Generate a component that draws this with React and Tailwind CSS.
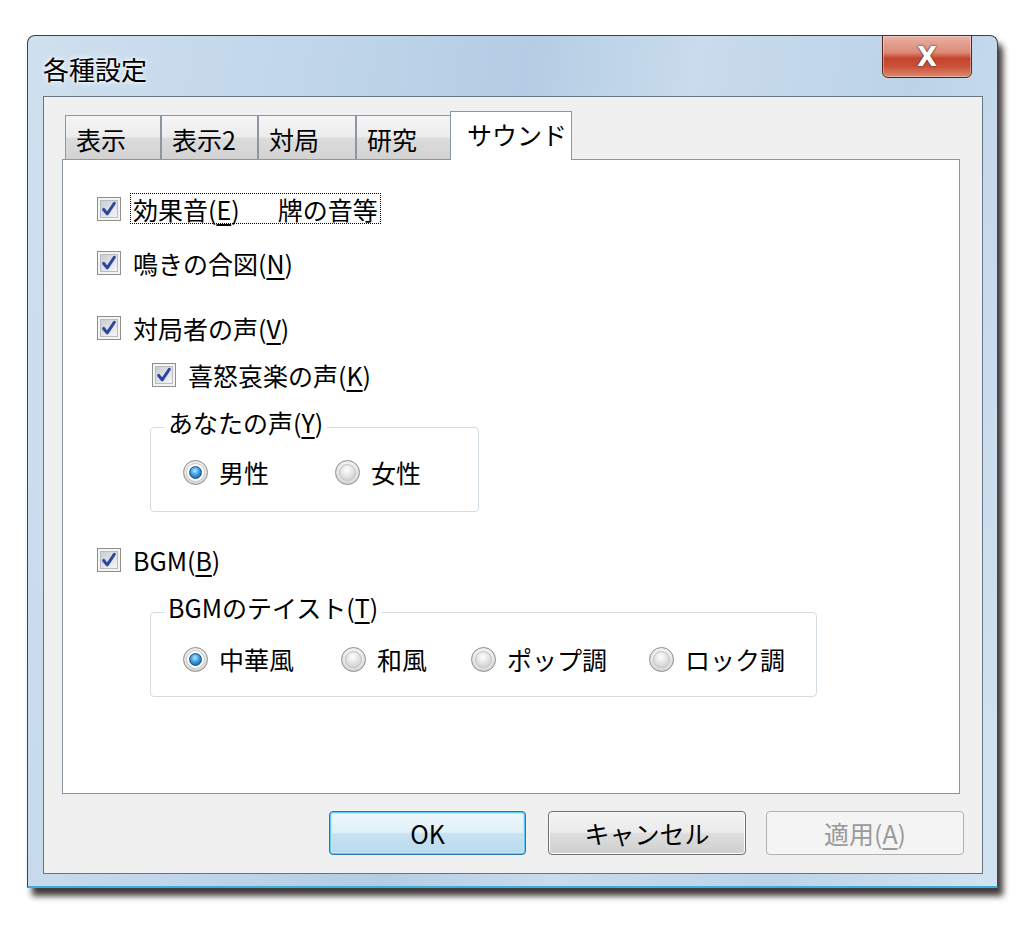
import React from "react";

function Check() {
  return (
    <div className="w-[24px] h-[24px] shrink-0 border border-[#8e8f8f] bg-[#f4f4f4] p-[2px]">
      <div className="w-full h-full border border-[#b9bcc0] bg-[linear-gradient(135deg,#c9ccd1,#f6f6f6)] flex items-center justify-center">
        <svg width="18" height="18" viewBox="0 0 18 18">
          <path d="M3 9.5 L7 14.5 L15 2.5" fill="none" stroke="#2b47a0" strokeWidth="3.4" strokeLinecap="round" strokeLinejoin="round" />
        </svg>
      </div>
    </div>
  );
}

function Radio({ on }) {
  return (
    <div className="w-[25px] h-[25px] shrink-0 rounded-full border border-[#8d8d8d] bg-[radial-gradient(circle_at_50%_35%,#ffffff,#e6e6e6_55%,#c4c4c4)] flex items-center justify-center">
      {on ? (
        <div className="w-[19px] h-[19px] rounded-full bg-white flex items-center justify-center border border-[#c9c9c9]">
          <div className="w-[13px] h-[13px] rounded-full border border-[#1c4f7e] bg-[radial-gradient(circle_at_45%_35%,#b5ecff,#3a9be0_45%,#104f8f)]" />
        </div>
      ) : (
        <div className="w-[17px] h-[17px] rounded-full bg-[radial-gradient(circle_at_45%_35%,#ffffff,#dcdcdc_60%,#c8c8c8)] border border-[#c2c2c2]" />
      )}
    </div>
  );
}

function U({ children }) {
  return <span className="underline underline-offset-[4px] decoration-[2px]">{children}</span>;
}

function CheckRow({ children, className = "" }) {
  return (
    <div className={"h-[30px] flex items-center " + className}>
      <Check />
      <span className="ml-[12px] whitespace-nowrap">{children}</span>
    </div>
  );
}

function RadioItem({ on, w, children }) {
  return (
    <div className={"h-[30px] flex items-center " + w}>
      <Radio on={on} />
      <span className="ml-[11px] whitespace-nowrap">{children}</span>
    </div>
  );
}

export default function App() {
  const tabBase =
    "h-[44px] border border-b-0 border-[#8c97a3] bg-[linear-gradient(#f6f6f6,#ececec_48%,#dcdcdc_52%,#d2d2d2)] flex items-center pl-[10px] pt-[2px] shrink-0";
  return (
    <div className="w-[1024px] min-h-[926px] bg-white pt-[35px] pl-[27px] text-black text-[25px] leading-[30px] font-['Noto_Sans_CJK_JP','Noto_Sans',sans-serif]">
      <div className="relative w-[971px] h-[853px] rounded-t-[8px] border border-[#3b4550] border-b-2 border-b-[#39aee0] bg-[linear-gradient(100deg,#cfe0ef_0%,#c1d6ea_25%,#b4cde4_45%,#c9dbec_60%,#bcd3e8_80%,#d3e3f1_100%)] shadow-[5px_8px_6px_rgba(20,10,10,0.8)] flex flex-col">
        {/* title bar */}
        <div className="h-[60px] shrink-0 flex items-start">
          <span className="ml-[15px] mt-[18px] text-[26px] [text-shadow:0_0_6px_#ffffff,0_0_3px_#ffffff]">各種設定</span>
        </div>
        <div className="absolute right-[25px] -top-px w-[90px] h-[43px] rounded-b-[6px] border border-[#5e2419] bg-[linear-gradient(#e9b1a5,#dc8a78_40%,#c4432b_55%,#c9533a_75%,#dd8a70)] shadow-[inset_0_0_0_1px_rgba(255,255,255,0.35)] flex items-center justify-center">
          <span className="text-white font-['DejaVu_Sans',sans-serif] font-bold text-[26px] leading-none [text-shadow:0_0_2px_#3b2a2a,0_0_1px_#3b2a2a]">X</span>
        </div>

        {/* client */}
        <div className="ml-[15px] mr-[14px] h-[778px] shrink-0 border border-[#687480] bg-[#f0f0f0] flex flex-col">
          {/* tabs */}
          <div className="ml-[21px] mt-[14px] flex items-end h-[48px] relative z-10">
            <div className={tabBase + " w-[96px]"}>表示</div>
            <div className={tabBase + " w-[97px]"}>表示2</div>
            <div className={tabBase + " w-[98px]"}>対局</div>
            <div className={tabBase + " w-[96px]"}>研究</div>
            <div className="-ml-[2px] h-[49px] -mb-px w-[122px] border border-b-0 border-[#8c97a3] bg-white flex items-start pl-[16px] pt-[7px] shrink-0">サウンド</div>
          </div>
          {/* panel */}
          <div className="ml-[18px] mr-[22px] h-[635px] shrink-0 border border-[#8c97a3] bg-white pl-[34px] pt-[33px] flex flex-col items-start">
            <div className="h-[31px] flex items-center">
              <Check />
              <span className="ml-[9px] h-[31px] flex items-center px-[2px] border border-dotted border-black whitespace-nowrap">
                効果音(<U>E</U>)<span className="inline-block w-[38px]"></span>牌の音等
              </span>
            </div>
            <CheckRow className="mt-[24px]">鳴きの合図(<U>N</U>)</CheckRow>
            <CheckRow className="mt-[35px]">対局者の声(<U>V</U>)</CheckRow>
            <CheckRow className="mt-[17px] ml-[55px]">喜怒哀楽の声(<U>K</U>)</CheckRow>

            <div className="relative mt-[37px] ml-[53px] w-[329px] h-[85px] border border-[#d3dce3] rounded-[4px] pl-[32px] pt-[29px] flex items-start">
              <span className="absolute -top-[21px] left-[13px] bg-white px-[4px] whitespace-nowrap">あなたの声(<U>Y</U>)</span>
              <RadioItem on w="w-[152px]">男性</RadioItem>
              <RadioItem w="w-[120px]">女性</RadioItem>
            </div>

            <CheckRow className="mt-[33px]">BGM(<U>B</U>)</CheckRow>

            <div className="relative mt-[37px] ml-[53px] w-[667px] h-[85px] border border-[#d3dce3] rounded-[4px] pl-[32px] pt-[31px] flex items-start">
              <span className="absolute -top-[21px] left-[13px] bg-white px-[4px] whitespace-nowrap">BGMのテイスト(<U>T</U>)</span>
              <RadioItem on w="w-[158px]">中華風</RadioItem>
              <RadioItem w="w-[130px]">和風</RadioItem>
              <RadioItem w="w-[178px]">ポップ調</RadioItem>
              <RadioItem w="w-[140px]">ロック調</RadioItem>
            </div>
          </div>

          {/* buttons */}
          <div className="mt-[17px] mr-[18px] flex justify-end">
            <div className="w-[197px] h-[44px] rounded-[4px] border border-[#2f73a8] shadow-[inset_0_0_0_1px_#5fcaf5,inset_0_0_0_2px_#bfe9fb] bg-[linear-gradient(#eef7fc,#e0f0f9_48%,#c7e3f3_52%,#b9d9ec)] flex items-center justify-center">OK</div>
            <div className="ml-[22px] w-[198px] h-[44px] rounded-[4px] border border-[#707070] shadow-[inset_0_0_0_1px_#fbfbfb] bg-[linear-gradient(#f3f3f3,#ebebeb_48%,#dddddd_52%,#cfcfcf)] flex items-center justify-center">キャンセル</div>
            <div className="ml-[20px] w-[198px] h-[44px] rounded-[4px] border border-[#adb2b5] bg-[#f4f4f4] text-[#9a9a9a] flex items-center justify-center">適用(<U>A</U>)</div>
          </div>
        </div>
      </div>
    </div>
  );
}
